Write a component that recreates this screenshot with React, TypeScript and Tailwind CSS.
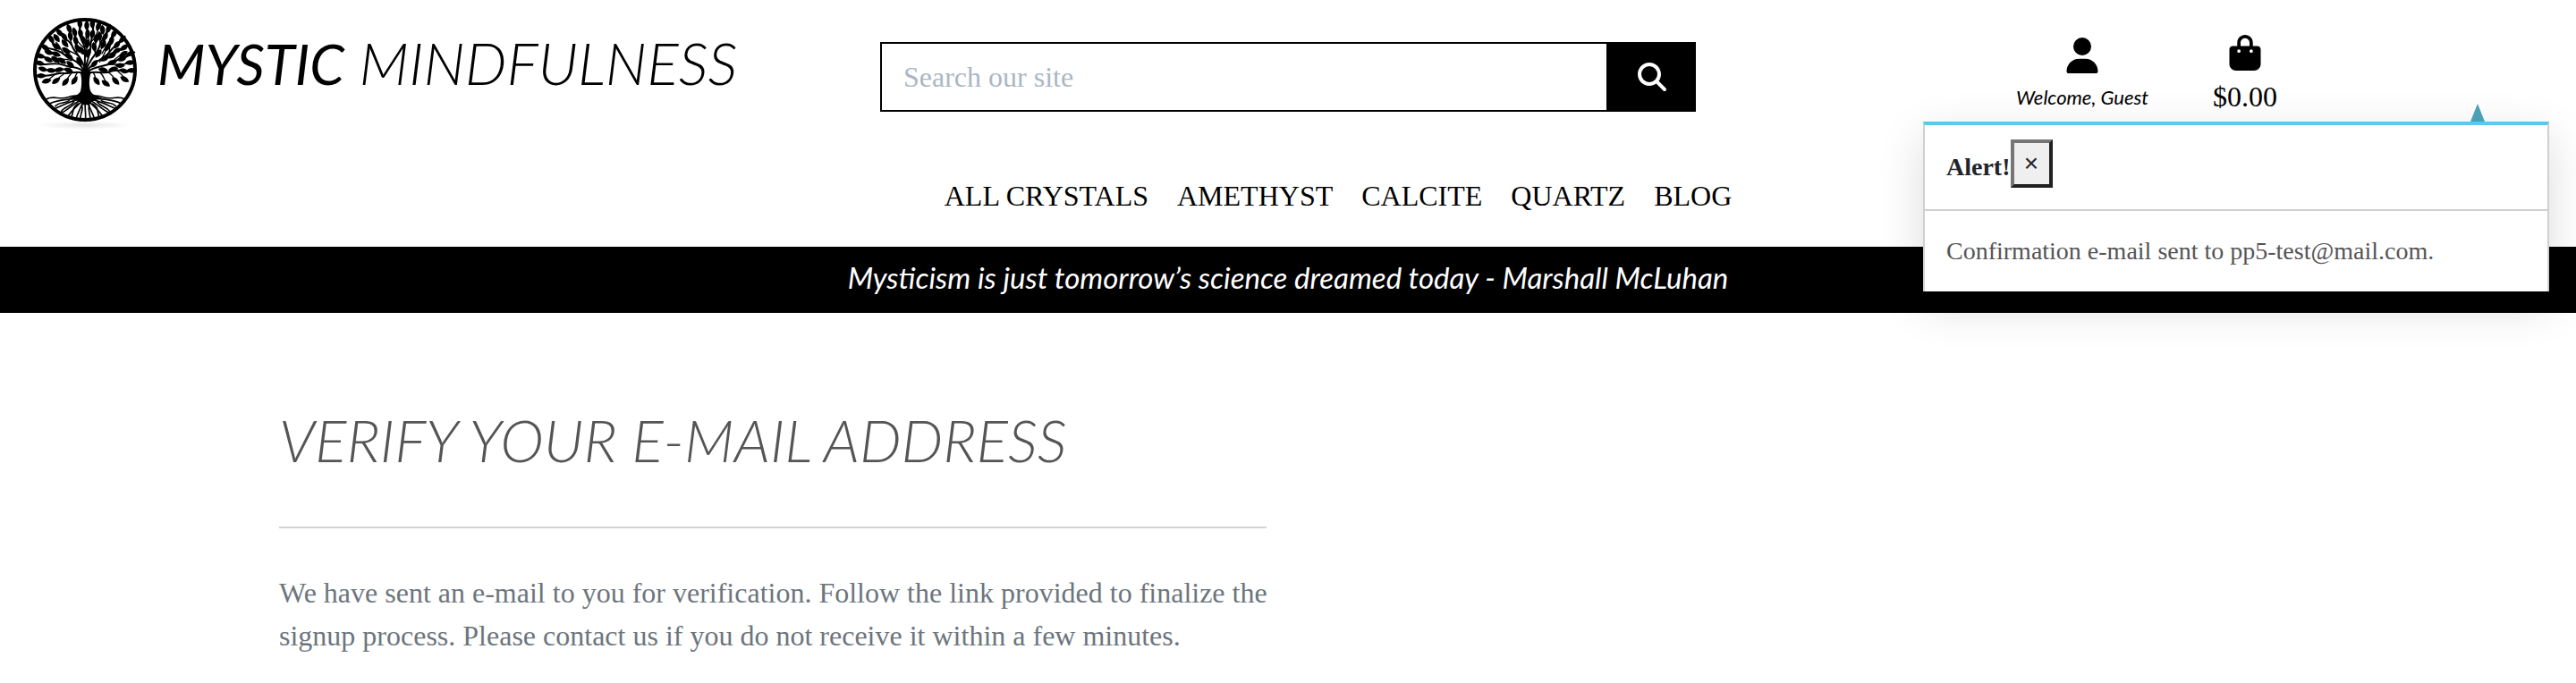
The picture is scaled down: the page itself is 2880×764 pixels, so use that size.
import { FaBagShopping, FaMagnifyingGlass, FaUser } from "react-icons/fa6";

const limbs = [
  "M188 216C165 206 150 218 128 216C104 212 88 226 56 224",
  "M188 208C164 190 148 198 122 188C98 178 84 186 46 186",
  "M190 204C168 168 146 172 124 152C104 136 92 138 66 130",
  "M194 202C184 158 160 148 152 124C144 104 128 104 112 84",
  "M196 200C190 160 202 140 190 118C180 98 172 84 180 50",
  "M198 200C202 166 214 150 214 126C214 98 226 82 222 48",
  "M200 204C212 164 238 150 244 124C250 100 266 92 272 66",
  "M203 206C226 172 256 172 276 146C292 124 306 120 318 100",
  "M205 210C234 188 262 196 290 178C312 164 326 166 346 154",
  "M206 216C232 206 256 220 280 210C306 200 326 212 352 206",
];

const twigs = [
  "M170 212C164 222 162 226 160 234",
  "M150 214C144 224 138 230 132 238",
  "M128 216C118 222 110 228 102 236",
  "M100 216C88 224 82 230 72 238",
  "M222 212C228 222 230 228 232 236",
  "M246 214C256 222 258 232 264 244",
  "M274 212C284 220 290 228 296 236",
  "M302 206C314 216 320 222 328 232",
  "M150 194C138 206 120 202 104 206",
  "M108 182C88 166 72 166 46 156",
  "M150 173C136 166 110 170 84 166",
  "M124 152C114 136 112 124 98 112",
  "M168 150C164 138 170 122 166 108",
  "M152 124C142 100 148 84 142 66",
  "M176 162C170 150 150 146 134 136",
  "M192 130C178 120 160 100 158 82",
  "M196 150C206 130 204 112 198 92",
  "M214 126C206 98 200 80 202 54",
  "M216 110C230 98 238 80 240 60",
  "M230 150C224 132 234 112 234 98",
  "M247 116C238 96 250 84 254 70",
  "M252 150C262 130 274 116 290 84",
  "M262 160C284 144 296 148 324 128",
  "M276 146C276 126 284 114 284 104",
  "M244 178C256 160 262 150 264 138",
  "M262 188C284 184 308 190 350 182",
  "M282 182C296 166 308 160 322 148",
  "M98 134C86 124 84 114 84 104",
];

const roots = [
  "M66 302C90 290 112 306 138 296S170 296 190 290",
  "M328 302C304 290 282 306 256 296S222 296 202 290",
  "M185 298C150 305 110 300 76 318",
  "M185 302C150 306 125 322 90 336",
  "M186 305C160 312 142 338 110 352",
  "M188 306C172 325 152 336 136 364",
  "M192 306C182 330 172 344 164 372",
  "M197 306C192 330 200 350 196 376",
  "M201 306C208 330 220 345 228 372",
  "M204 306C220 325 240 336 256 364",
  "M206 304C232 314 250 338 282 352",
  "M208 302C240 306 268 322 302 336",
  "M208 298C245 304 285 300 318 318",
  "M142 308C126 318 108 312 96 326",
  "M158 312C144 330 124 328 116 344",
  "M172 318C150 330 158 348 148 366",
  "M184 322C192 344 176 352 180 374",
  "M209 322C202 344 216 352 212 374",
  "M220 318C244 330 234 348 244 366",
  "M236 312C250 330 268 328 278 344",
  "M250 308C268 318 286 312 298 326",
];

/* x, y, rotation in degrees */
const leaves: [number, number, number][] = [
  [66, 242, -15], [98, 241, -35], [130, 245, -50], [160, 240, -55],
  [234, 242, 55], [265, 250, 35], [298, 242, 45], [328, 236, 30],
  [48, 224, 0], [54, 202, 15], [82, 206, 5], [108, 204, -10], [140, 206, 20],
  [44, 182, 15], [46, 158, 15], [72, 170, 25], [96, 170, 35], [118, 174, 35], [146, 186, 40],
  [62, 130, 35], [74, 146, 20], [98, 152, 20], [100, 126, 40], [132, 140, 35], [142, 160, 35],
  [82, 102, 60], [100, 98, 55], [110, 80, 50], [126, 94, 60], [128, 116, 50],
  [142, 66, 70], [146, 92, 80], [160, 78, 75], [164, 106, 80], [170, 132, 65],
  [178, 50, 85], [180, 82, 80], [190, 104, 65], [184, 140, 60], [176, 176, 60],
  [201, 56, 90], [204, 84, 90], [202, 118, 95], [206, 148, 110], [220, 50, 90],
  [220, 84, 100], [232, 100, 95], [226, 128, 80], [240, 58, 110], [254, 70, 85], [244, 92, 85],
  [274, 66, 110], [262, 94, 120], [256, 120, 115], [240, 150, 125],
  [292, 84, 120], [284, 106, 100], [270, 128, 115], [320, 102, 130], [302, 120, 130],
  [326, 130, 145], [302, 140, 155], [286, 156, 145], [348, 150, 160], [324, 152, 145],
  [262, 166, 145], [318, 168, 165], [346, 180, 175], [312, 190, 180], [286, 180, 165],
  [352, 206, 0], [326, 208, 15], [290, 202, 170], [256, 204, 10], [226, 184, 130],
];

function TreeLogo() {
  return (
    <svg viewBox="0 0 390 420" className="h-[140px] w-[130px] shrink-0" role="img" aria-label="Tree of life">
      <defs>
        <radialGradient id="ground">
          <stop offset="0" stopColor="#000" stopOpacity="0.1" />
          <stop offset="1" stopColor="#000" stopOpacity="0" />
        </radialGradient>
      </defs>
      <ellipse cx="195" cy="390" rx="155" ry="14" fill="url(#ground)" />
      <circle cx="195" cy="204" r="168" fill="#fff" stroke="#000" strokeWidth="12" />
      <g fill="none" stroke="#000" strokeLinecap="round">
        <g strokeWidth="6">{limbs.map((d) => <path key={d} d={d} />)}</g>
        <g strokeWidth="4">{twigs.map((d) => <path key={d} d={d} />)}</g>
        <g strokeWidth="5">{roots.map((d) => <path key={d} d={d} />)}</g>
      </g>
      <path d="M178 212C186 228 184 262 180 276C174 290 152 294 140 300C165 304 180 310 186 322L210 322C218 308 232 304 254 300C240 294 220 290 214 276C208 262 208 228 216 212C206 208 204 196 197 190C190 198 188 208 178 212Z" />
      {leaves.map(([x, y, r]) => (
        <path key={`${x}-${y}`} d="M-17 0C-8 -11 6 -11 17 0C6 11 -8 11 -17 0Z" transform={`translate(${x} ${y}) rotate(${r})`} />
      ))}
    </svg>
  );
}

const links = ["ALL CRYSTALS", "AMETHYST", "CALCITE", "QUARTZ", "BLOG"];

export default function App() {
  return (
    <div className="relative font-['Liberation_Serif',serif] text-[32px] leading-[48px] text-black">
      <header>
        <div className="grid grid-cols-3">
          <a href="#home" className="flex items-start pt-[10px] pl-[30px]">
            <TreeLogo />
            <span className="pt-6 pl-4 font-['Lato',sans-serif] text-[66px] leading-[72px] font-light italic whitespace-nowrap">
              <strong className="text-[62px] font-normal">MYSTIC</strong> MINDFULNESS
            </span>
          </a>
          <form className="flex h-[125px] px-6 pt-[47px]" onSubmit={(e) => e.preventDefault()}>
            <input
              type="search"
              aria-label="Search our site"
              placeholder="Search our site"
              className="min-w-0 flex-1 border-2 border-black px-6 outline-none placeholder:text-[#aab7c4]"
            />
            <button type="submit" aria-label="Search" className="flex w-[98px] items-center justify-center bg-black text-white">
              <FaMagnifyingGlass size={32} />
            </button>
          </form>
          <ul className="flex items-start justify-center gap-[72px]">
            <li>
              <a href="#account" className="flex flex-col items-center pt-[42px]">
                <FaUser size={40} />
                <span className="font-['Lato',sans-serif] text-[22px] leading-[54px] italic">Welcome, Guest</span>
              </a>
            </li>
            <li>
              <a href="#bag" className="flex flex-col items-center pt-[39px]">
                <FaBagShopping size={40} />
                <span className="leading-[58px]">$0.00</span>
              </a>
            </li>
          </ul>
        </div>
        <nav className="flex justify-center pt-[45px] pb-[33px] pl-28">
          <ul className="flex gap-8">
            {links.map((l) => (
              <li key={l}><a href="#shop" className="whitespace-nowrap">{l}</a></li>
            ))}
          </ul>
        </nav>
      </header>
      <p className="bg-black pt-[2px] pb-2 text-center font-['Lato',sans-serif] text-[33px] leading-[64px] italic text-white">
        Mysticism is just tomorrow’s science dreamed today - Marshall McLuhan
      </p>
      <main className="px-[312px] pt-[102px]">
        <div className="max-w-[1104px]">
          <h1 className="font-['Lato',sans-serif] text-[66px] leading-[80px] font-light italic whitespace-nowrap text-[#555]">
            VERIFY YOUR E-MAIL ADDRESS
          </h1>
          <hr className="mt-[57px] border-t-2 border-[#d3d3d3]" />
          <p className="mt-12 -mr-4 text-[#6c757d]">
            We have sent an e-mail to you for verification. Follow the link provided to finalize the signup process. Please contact us if you do not receive it within a few minutes.
          </p>
        </div>
      </main>
      <section role="alert" className="absolute top-[136px] right-[30px] w-[700px] border-x-2 border-t-4 border-x-[#d0d0d0] border-t-[#5bc8ec] bg-white text-[28px] leading-[42px] shadow-[0_16px_48px_rgba(0,0,0,0.14)]">
        <svg viewBox="0 0 16 20" className="absolute -top-6 right-[70px] h-5 w-4" aria-hidden="true">
          <path d="M8 0L16 20H0Z" fill="#4ba0b5" />
        </svg>
        <div className="flex items-start border-b-2 border-[#d0d0d0] px-6 pt-4 pb-6">
          <strong className="pt-[10px] text-[#212529]">Alert!</strong>
          <button
            type="button"
            aria-label="Close"
            className="flex h-[54px] w-[47px] items-center justify-center border-4 border-t-[#767676] border-r-[#212121] border-b-[#212121] border-l-[#767676] bg-[#efefef] font-['Liberation_Sans',sans-serif] text-[#212529]"
          >
            ×
          </button>
        </div>
        <p className="p-6 text-[#555]">Confirmation e-mail sent to pp5-test@mail.com.</p>
      </section>
    </div>
  );
}
